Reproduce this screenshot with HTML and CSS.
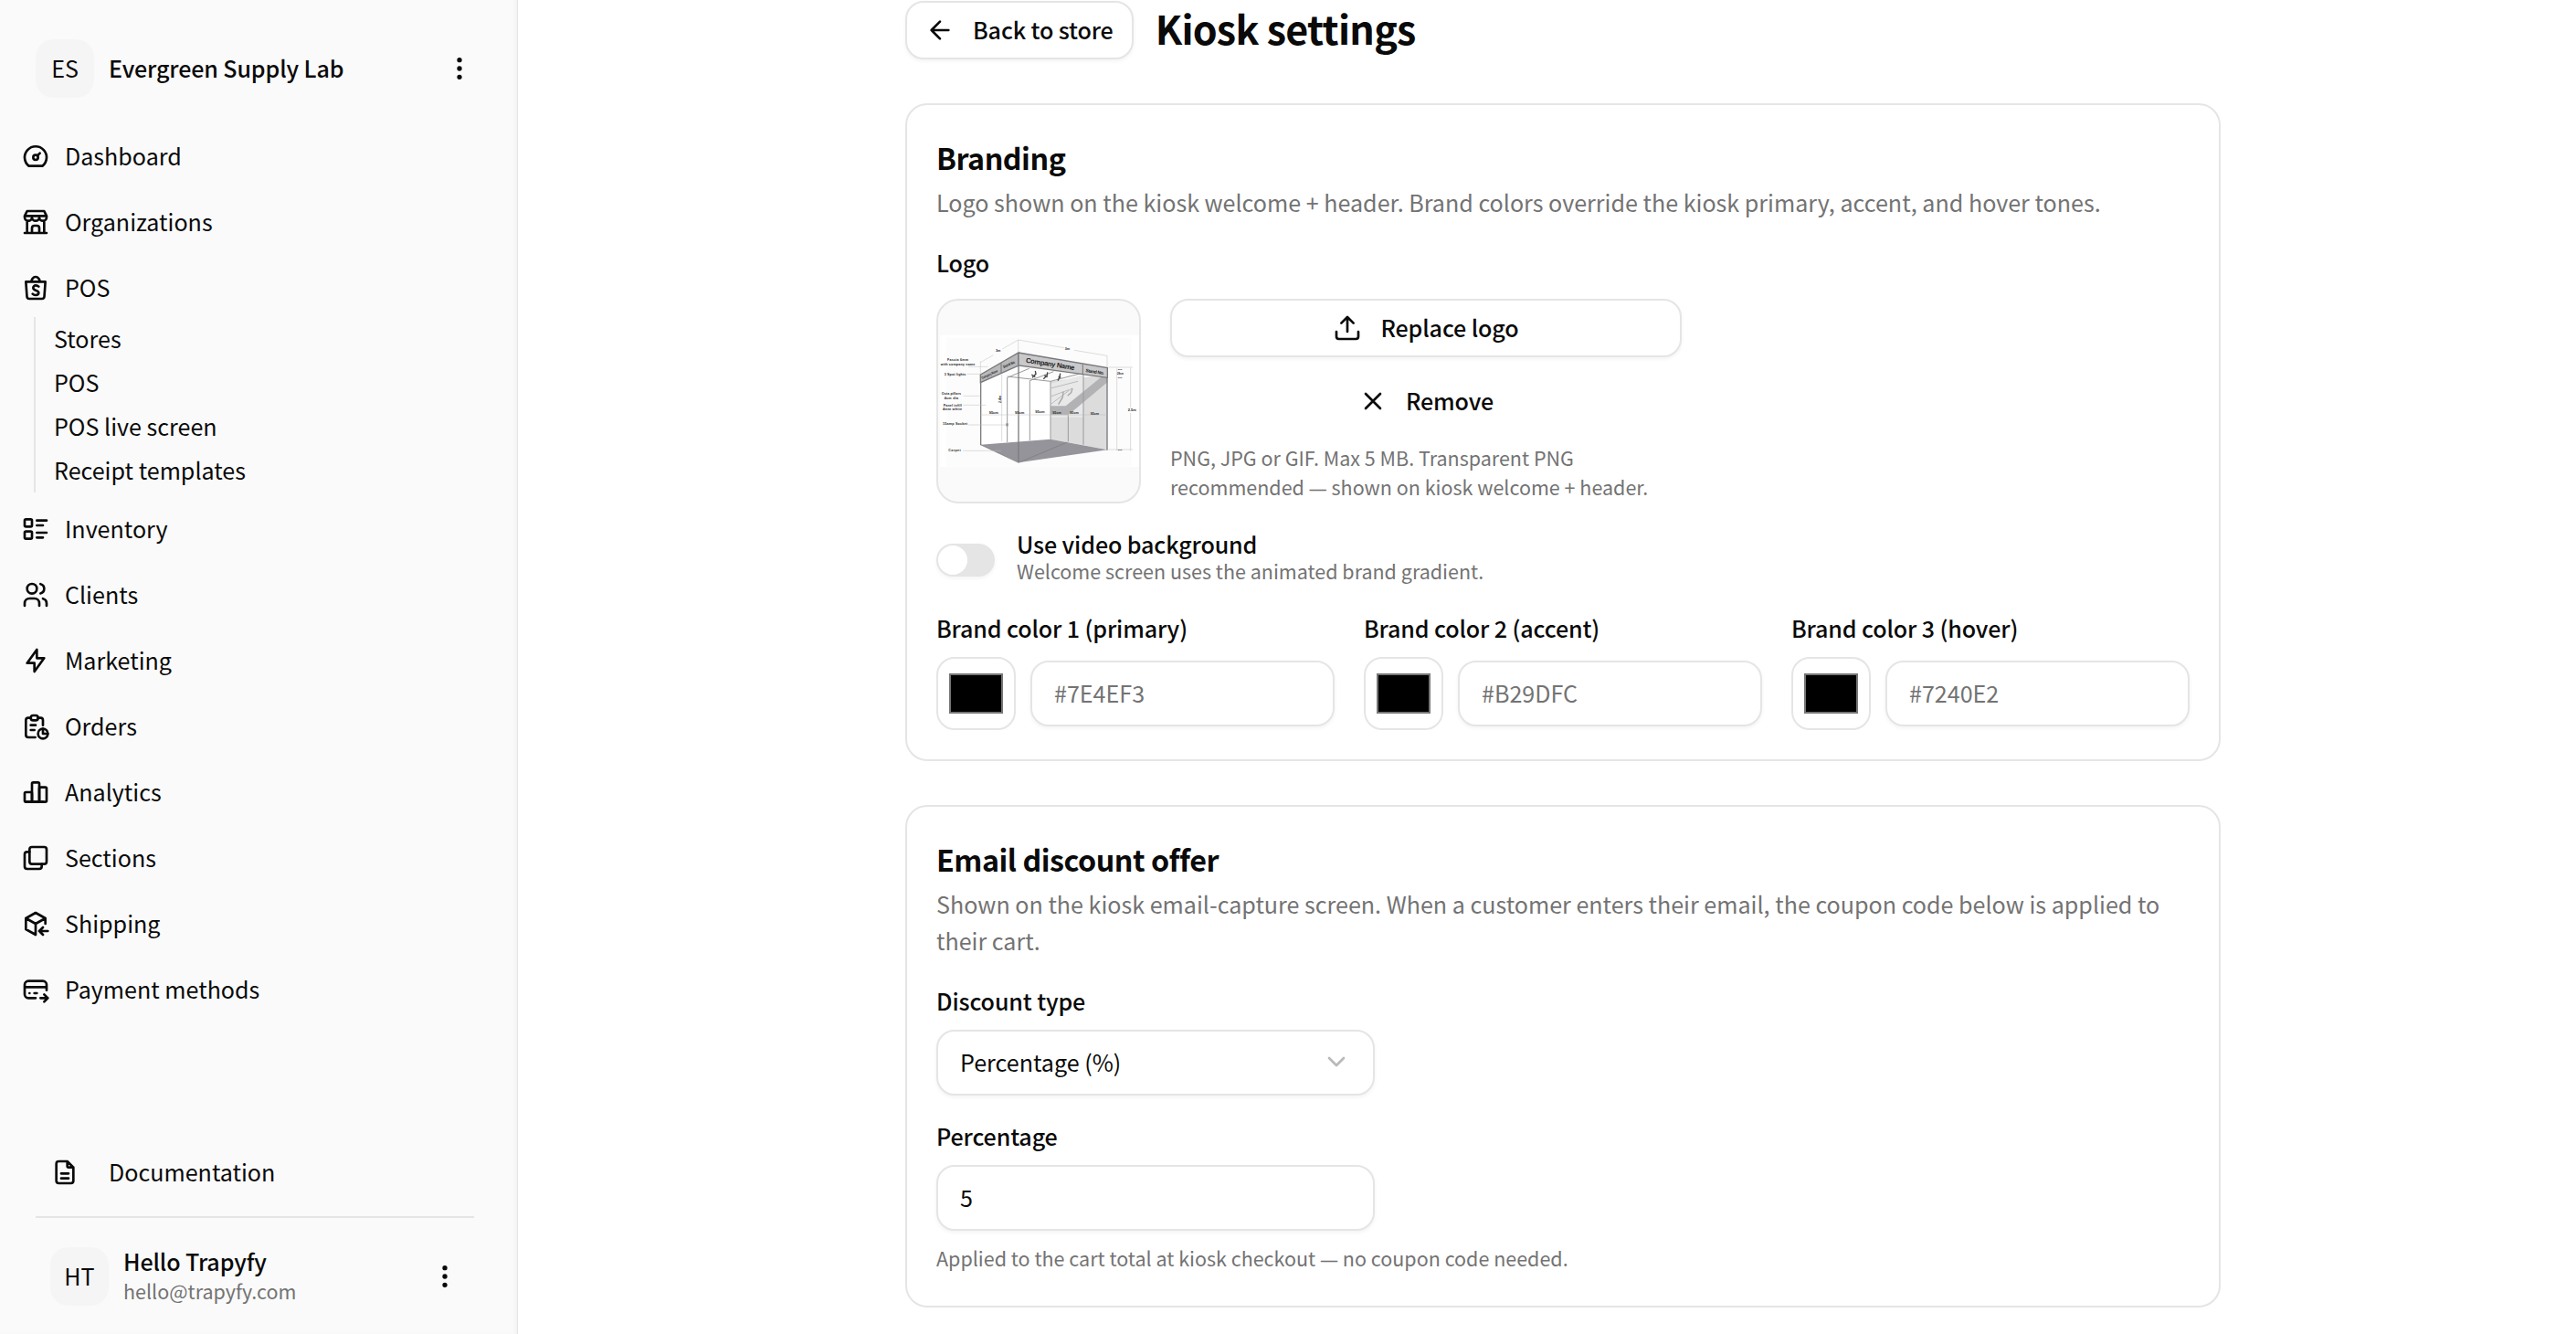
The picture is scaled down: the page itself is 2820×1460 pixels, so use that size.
FILE: index.html
```html
<!DOCTYPE html>
<html lang="en">

<head>
    <meta charset="UTF-8">
    <meta name="viewport" content="width=device-width, initial-scale=1.0">
    <title>Kiosk settings</title>
    <link rel="stylesheet" href="styles.css">
</head>

<body>
    <aside class="sidebar">
        <div class="org">
            <span class="avatar">ES</span>
            <span class="org-name">Evergreen Supply Lab</span>
            <svg class="icon" viewBox="0 0 24 24"><circle cx="12" cy="5" r="1"/><circle cx="12" cy="12" r="1"/><circle cx="12" cy="19" r="1"/></svg>
        </div>

        <nav class="menu">
            <a class="menu-item">
                <svg class="icon" viewBox="0 0 24 24"><circle cx="12" cy="13" r="2"/><path d="M13.45 11.55l2.05 -2.05M6.4 20a9 9 0 1 1 11.2 0z"/></svg>
                <span>Dashboard</span>
            </a>
            <a class="menu-item">
                <svg class="icon" viewBox="0 0 24 24"><path d="M3 21h18M3 7v1a3 3 0 0 0 6 0v-1m0 1a3 3 0 0 0 6 0v-1m0 1a3 3 0 0 0 6 0v-1h-18l2 -4h14l2 4M5 21v-10.15M19 21v-10.15M9 21v-4a2 2 0 0 1 2 -2h2a2 2 0 0 1 2 2v4"/></svg>
                <span>Organizations</span>
            </a>
            <a class="menu-item">
                <svg class="icon" viewBox="0 0 24 24"><path d="M4 7l.867 12.143a2 2 0 0 0 2 1.857h10.276a2 2 0 0 0 2 -1.857l.867 -12.143h-16zM8.5 7c0 -1.653 1.5 -4 3.5 -4s3.5 2.347 3.5 4M9.5 17c.413 .462 1 1 2.5 1s2.5 -.897 2.5 -2s-1 -1.5 -2.5 -2s-2 -1.47 -2 -2c0 -1.104 1 -2 2 -2s1.5 0 2.5 1"/></svg>
                <span>POS</span>
            </a>
            <div class="submenu">
                <a>Stores</a>
                <a>POS</a>
                <a>POS live screen</a>
                <a>Receipt templates</a>
            </div>
            <a class="menu-item">
                <svg class="icon" viewBox="0 0 24 24"><path d="M13 5h8M13 9h5M13 15h8M13 19h5"/><rect x="3" y="4" width="6" height="6" rx="1"/><rect x="3" y="14" width="6" height="6" rx="1"/></svg>
                <span>Inventory</span>
            </a>
            <a class="menu-item">
                <svg class="icon" viewBox="0 0 24 24"><circle cx="9" cy="7" r="4"/><path d="M3 21v-2a4 4 0 0 1 4 -4h4a4 4 0 0 1 4 4v2M16 3.13a4 4 0 0 1 0 7.75M21 21v-2a4 4 0 0 0 -3 -3.85"/></svg>
                <span>Clients</span>
            </a>
            <a class="menu-item">
                <svg class="icon" viewBox="0 0 24 24"><path d="M13 3v7h6l-8 11v-7h-6l8 -11"/></svg>
                <span>Marketing</span>
            </a>
            <a class="menu-item">
                <svg class="icon" viewBox="0 0 24 24"><path d="M8 5h-2a2 2 0 0 0 -2 2v12a2 2 0 0 0 2 2h5.697M18 14v4h4M18 11v-4a2 2 0 0 0 -2 -2h-2M8 11h4M8 15h3"/><rect x="8" y="3" width="6" height="4" rx="2"/><circle cx="18" cy="18" r="4"/></svg>
                <span>Orders</span>
            </a>
            <a class="menu-item">
                <svg class="icon" viewBox="0 0 24 24"><rect x="3" y="12" width="6" height="8" rx="1"/><rect x="9" y="4" width="6" height="16" rx="1"/><rect x="15" y="8" width="6" height="12" rx="1"/><path d="M4 20h14"/></svg>
                <span>Analytics</span>
            </a>
            <a class="menu-item">
                <svg class="icon" viewBox="0 0 24 24"><rect x="7" y="3" width="14" height="14" rx="2"/><path d="M17 17v2a2 2 0 0 1 -2 2h-10a2 2 0 0 1 -2 -2v-10a2 2 0 0 1 2 -2h2"/></svg>
                <span>Sections</span>
            </a>
            <a class="menu-item">
                <svg class="icon" viewBox="0 0 24 24"><path d="M12 21l-8 -4.5v-9l8 -4.5l8 4.5v4.5M12 12l8 -4.5M12 12v9M12 12l-8 -4.5M22 18h-7M18 15l-3 3l3 3"/></svg>
                <span>Shipping</span>
            </a>
            <a class="menu-item">
                <svg class="icon" viewBox="0 0 24 24"><path d="M12 19h-6a3 3 0 0 1 -3 -3v-8a3 3 0 0 1 3 -3h12a3 3 0 0 1 3 3v4.5M3 10h18M16 19h6M19 16l3 3l-3 3M7.005 15h.005M11 15h2"/></svg>
                <span>Payment methods</span>
            </a>
        </nav>

        <a class="docs">
            <svg class="icon" viewBox="0 0 24 24"><path d="M14 3v4a1 1 0 0 0 1 1h4M17 21h-10a2 2 0 0 1 -2 -2v-14a2 2 0 0 1 2 -2h7l5 5v11a2 2 0 0 1 -2 2zM9 17h6M9 13h6"/></svg>
            <span>Documentation</span>
        </a>

        <div class="user">
            <span class="avatar">HT</span>
            <div class="user-info">
                <div class="user-name">Hello Trapyfy</div>
                <div class="user-email">hello@trapyfy.com</div>
            </div>
            <svg class="icon" viewBox="0 0 24 24"><circle cx="12" cy="5" r="1"/><circle cx="12" cy="12" r="1"/><circle cx="12" cy="19" r="1"/></svg>
        </div>
    </aside>

    <main class="content">
        <header class="page-header">
            <button class="btn btn-back">
                <svg class="icon" viewBox="0 0 24 24"><path d="M12 19l-7 -7l7 -7M19 12H5"/></svg>
                <span>Back to store</span>
            </button>
            <h1>Kiosk settings</h1>
        </header>

        <section class="card">
            <h2>Branding</h2>
            <p class="description">Logo shown on the kiosk welcome + header. Brand colors override the kiosk primary, accent, and hover tones.</p>

            <div class="label">Logo</div>
            <div class="logo-row">
                <div class="logo-preview">
                    <!-- Exhibition stand drawing -->
                    <svg class="stand" viewBox="51 57 660 660">
                        <rect x="57" y="171" width="655" height="432" fill="#fff"/>
                        <rect x="78" y="179" width="607" height="422" fill="#fcfcfc"/>
                        <path d="M190 326L315 268V584L190 530z" fill="#fefefe"/>
                        <path d="M280 308L420 322V512L190 530V326z" fill="#fff"/>
                        <path d="M420 322L607 300V546L420 512z" fill="#dcdcdd"/>
                        <path d="M420 330L528 300V440H420z" fill="#e8e8e9"/>
                        <path d="M420 403H470L590 305H607V325L478 433H420z" fill="#b2b2b4"/>
                        <path d="M190 530L420 512L607 547L315 589z" fill="#94949a"/>
                        <path d="M190 530L315 589L475 522" fill="none" stroke="#77777c" stroke-width="2"/>
                        <g fill="none" stroke="#9a9a9d" stroke-width="3">
                            <path d="M278 310V522M352 320V516M420 322V512M478 433V520M528 300V530"/>
                            <path d="M278 310L350 280M352 320L430 290M420 322L520 296M278 306L420 322"/>
                            <path d="M420 345L510 322M420 372L480 350M420 398L490 345" stroke="#bbb"/>
                        </g>
                        <g stroke="#7c7c80" stroke-width="4">
                            <path d="M191 300V532M315 228V588M606 278V548"/>
                        </g>
                        <path d="M190 300L315 228V270L190 326z" fill="#b9b9bb" stroke="#77777a" stroke-width="4"/>
                        <path d="M315 228L607 278V310L315 270z" fill="#c9c9cb" stroke="#77777a" stroke-width="4"/>
                        <path d="M258 262V294M526 266V298" stroke="#77777a" stroke-width="3"/>
                        <g fill="none" stroke="#444" stroke-width="4">
                            <path d="M370 288l2 10l-12 12M358 300l12 8M410 292l-1 10l-12 12M400 302l10 6M452 296l-2 12l-6 12M446 306l8 4"/>
                        </g>
                        <path d="M462 356l-2 18l-14 24M492 345l-4 14l-12 10" fill="none" stroke="#a5a5a8" stroke-width="4"/>
                        <g fill="none" stroke="#bdbdbd" stroke-width="1.5">
                            <path d="M190 260L232 236M262 216L314 186L465 212M498 220L606 238V275M190 256V298M314 186V228"/>
                            <path d="M638 280V550M683 278V408M683 426V550M610 276H690M610 546H690"/>
                            <path d="M150 274H215M145 298H190M133 370H190M133 400H208M150 465H275M133 550H258M190 432H606M260 300V520"/>
                        </g>
                        <rect x="274" y="460" width="7" height="9" fill="#888"/>
                        <g class="stand-text">
                            <text x="338" y="260" font-size="23" textLength="162" transform="rotate(9 338 260)">Company Name</text>
                            <text x="535" y="291" font-size="15" textLength="61" transform="rotate(9 535 291)">Stand No.</text>
                            <text x="196" y="315" font-size="12" textLength="57" lengthAdjust="spacingAndGlyphs" transform="rotate(-25 196 315)">Company Name</text>
                            <text x="266" y="279" font-size="13" textLength="43" lengthAdjust="spacingAndGlyphs" transform="rotate(-24 266 279)">Stand No.</text>
                            <text x="240" y="225" font-size="11">3m</text>
                            <text x="467" y="220" font-size="11">3m</text>
                            <text x="81" y="254" font-size="11" textLength="69">Fascia 6mm</text>
                            <text x="59" y="269" font-size="11" textLength="113">with company name</text>
                            <text x="71" y="302" font-size="11" textLength="71">3 Spot lights</text>
                            <text x="62" y="367" font-size="11" textLength="64">Octa pillars</text>
                            <text x="71" y="381" font-size="11" textLength="46">4cm dia</text>
                            <text x="68" y="404" font-size="11" textLength="60">Panel infill</text>
                            <text x="66" y="418" font-size="11" textLength="63">4mm white</text>
                            <text x="66" y="464" font-size="11" textLength="81">15amp Socket</text>
                            <text x="85" y="552" font-size="11" textLength="40">Carpet</text>
                            <text x="218" y="428" font-size="12">95cm</text>
                            <text x="303" y="428" font-size="12">95cm</text>
                            <text x="370" y="427" font-size="12">95cm</text>
                            <text x="427" y="428" font-size="11">95cm</text>
                            <text x="484" y="430" font-size="11">95cm</text>
                            <text x="551" y="432" font-size="11">95cm</text>
                            <text x="258" y="393" font-size="11" transform="rotate(-90 258 393)">2.4m</text>
                            <text x="674" y="420" font-size="12">2.5m</text>
                            <text x="641" y="284" font-size="7">6cm</text>
                            <text x="639" y="299" font-size="8">28cm</text>
                            <text x="641" y="312" font-size="7">6cm</text>
                            <text x="641" y="549" font-size="7">6cm</text>
                        </g>
                    </svg>
                </div>
                <div class="logo-actions">
                    <button class="btn">
                        <svg class="icon" viewBox="0 0 24 24"><path d="M12 3v12M17 8l-5 -5l-5 5M21 15v4a2 2 0 0 1 -2 2H5a2 2 0 0 1 -2 -2v-4"/></svg>
                        <span>Replace logo</span>
                    </button>
                    <button class="btn btn-ghost">
                        <svg class="icon" viewBox="0 0 24 24"><path d="M18 6L6 18M6 6l12 12"/></svg>
                        <span>Remove</span>
                    </button>
                    <p class="hint">PNG, JPG or GIF. Max 5 MB. Transparent PNG<br>recommended <span class="dash">—</span> shown on kiosk welcome + header.</p>
                </div>
            </div>

            <div class="switch-row">
                <span class="switch"></span>
                <div>
                    <div class="label">Use video background</div>
                    <div class="switch-hint">Welcome screen uses the animated brand gradient.</div>
                </div>
            </div>

            <div class="colors">
                <div>
                    <div class="label">Brand color 1 (primary)</div>
                    <div class="color-field">
                        <span class="swatch"></span>
                        <input class="input" type="text" placeholder="#7E4EF3">
                    </div>
                </div>
                <div>
                    <div class="label">Brand color 2 (accent)</div>
                    <div class="color-field">
                        <span class="swatch"></span>
                        <input class="input" type="text" placeholder="#B29DFC">
                    </div>
                </div>
                <div>
                    <div class="label">Brand color 3 (hover)</div>
                    <div class="color-field">
                        <span class="swatch"></span>
                        <input class="input" type="text" placeholder="#7240E2">
                    </div>
                </div>
            </div>
        </section>

        <section class="card">
            <h2>Email discount offer</h2>
            <p class="description">Shown on the kiosk email-capture screen. When a customer enters their email, the coupon code below is applied to<br>their cart.</p>

            <div class="field">
                <div class="label">Discount type</div>
                <div class="input select">
                    <span>Percentage (%)</span>
                    <svg class="icon" viewBox="0 0 24 24"><path d="M6 9l6 6l6 -6"/></svg>
                </div>
            </div>
            <div class="field">
                <div class="label">Percentage</div>
                <input class="input" type="text" value="5">
            </div>
            <p class="hint">Applied to the cart total at kiosk checkout <span class="dash">—</span> no coupon code needed.</p>
        </section>
    </main>
</body>

</html>
```
FILE: styles.css
```css
:root {
    --text: #0a0a0a;
    --muted: #737373;
    --border: #e5e5e5;
    --shadow: 0 2px 4px rgba(0, 0, 0, 0.05);
}

*,
*::before {
    box-sizing: border-box;
}

body {
    margin: 0;
    height: 1460px;
    display: flex;
    overflow: hidden;
    background: #fff;
    color: var(--text);
    font-family: "Noto Sans CJK SC", "Noto Sans", sans-serif;
    font-size: 25.08px;
    line-height: 28px;
}

h1, h2, p {
    margin: 0;
}

.icon {
    width: 32px;
    height: 32px;
    flex: none;
    fill: none;
    stroke: currentColor;
    stroke-width: 2;
    stroke-linecap: round;
    stroke-linejoin: round;
}

/* Sidebar */
.sidebar {
    width: 567px;
    flex: none;
    display: flex;
    flex-direction: column;
    padding: 43px 0 31px 23px;
    background: #fafafa;
    border-right: 1px solid var(--border);
    box-shadow: inset -4px 0 4px -2px rgba(0, 0, 0, 0.03);
}

.avatar {
    width: 64px;
    height: 64px;
    flex: none;
    display: flex;
    align-items: center;
    justify-content: center;
    padding-bottom: 3px;
    border-radius: 20px;
    background: #f5f5f5;
}

.org {
    display: flex;
    align-items: center;
    gap: 16px;
    padding: 0 47px 0 16px;
}

.org-name {
    flex: 1;
    padding-bottom: 3px;
    font-weight: 500;
    letter-spacing: -0.13px;
}

.menu {
    flex: 1;
    display: flex;
    flex-direction: column;
    gap: 8px;
    padding-top: 32px;
}

.menu-item {
    height: 64px;
    display: flex;
    align-items: center;
    gap: 16px;
}

.menu-item span,
.docs span {
    padding-bottom: 3px;
}

.submenu {
    margin: -8px 0 0 14px;
    padding-left: 20px;
    border-left: 2px solid var(--border);
}

.submenu a {
    display: block;
    height: 48px;
    line-height: 46px;
}

.docs {
    display: flex;
    align-items: center;
    gap: 32px;
    height: 64px;
    margin-bottom: 16px;
    padding-left: 32px;
}

.user {
    display: flex;
    align-items: center;
    gap: 16px;
    width: 480px;
    margin-left: 16px;
    padding: 32px 16px 0;
    border-top: 2px solid var(--border);
}

.user-info {
    flex: 1;
}

.user-name {
    line-height: 31px;
    font-weight: 500;
    letter-spacing: -0.13px;
}

.user-email {
    line-height: 33px;
    font-size: 21.5px;
    color: var(--muted);
}

/* Page content */
.content {
    width: 1864px;
    padding: 1px 0 0 424px;
}

.page-header {
    display: flex;
    align-items: center;
    gap: 24px;
    margin-bottom: 48px;
}

h1 {
    height: 64px;
    line-height: 58px;
    font-size: 43px;
    font-weight: 600;
    letter-spacing: -0.7px;
}

.btn {
    height: 64px;
    display: flex;
    align-items: center;
    justify-content: center;
    gap: 20px;
    padding: 0 20px;
    border: 2px solid var(--border);
    border-radius: 20px;
    background: #fff;
    box-shadow: var(--shadow);
    color: var(--text);
    font: inherit;
    font-weight: 500;
    letter-spacing: -0.13px;
}

.btn span {
    padding-bottom: 3px;
}

.btn-ghost {
    border-color: transparent;
    background: none;
    box-shadow: none;
}

.card {
    margin-bottom: 48px;
    padding: 32px;
    border: 2px solid var(--border);
    border-radius: 24px;
}

h2 {
    line-height: 50px;
    font-size: 32.25px;
    font-weight: 600;
    letter-spacing: -0.48px;
}

.description {
    margin: 4px 0 32px;
    line-height: 40px;
    color: var(--muted);
}

.label {
    font-weight: 500;
    letter-spacing: -0.13px;
}

.hint {
    margin: 14px 0 2px;
    font-size: 21.5px;
    line-height: 32px;
    color: var(--muted);
}

.dash {
    font-family: "Open Sans", sans-serif;
    font-size: 20px;
}

/* Logo */
.logo-row {
    display: flex;
    gap: 32px;
    margin-top: 26px;
    height: 228px;
}

.logo-preview {
    width: 224px;
    height: 224px;
    border: 2px solid var(--border);
    border-radius: 24px;
    background: #fafafa;
    overflow: hidden;
}

.stand {
    display: block;
    width: 220px;
    height: 220px;
}

.stand-text {
    font-family: "Liberation Sans", sans-serif;
    font-weight: bold;
    fill: #222;
}

.logo-actions {
    width: 560px;
}

.btn-ghost {
    margin-top: 16px;
}

.logo-actions .btn {
    width: 100%;
}

/* Switch */
.switch-row {
    display: flex;
    align-items: center;
    gap: 24px;
    height: 64px;
    margin: 26px 0 28px;
}

.switch-row > div {
    height: 64px;
}

.switch {
    width: 64px;
    height: 36px;
    padding: 2px;
    border-radius: 18px;
    background: var(--border);
    box-shadow: var(--shadow);
}

.switch::before {
    content: "";
    display: block;
    width: 32px;
    height: 32px;
    border-radius: 50%;
    background: #fff;
}

.switch-hint {
    margin-top: 2px;
    font-size: 21.5px;
    color: var(--muted);
}

/* Form fields */
.colors {
    display: grid;
    grid-template-columns: repeat(3, 1fr);
    gap: 32px;
}

.color-field {
    display: flex;
    align-items: center;
    gap: 16px;
    margin-top: 18px;
}

.swatch {
    width: 87px;
    height: 80px;
    flex: none;
    padding: 16px 12px;
    border: 2px solid var(--border);
    border-radius: 20px;
}

.swatch::before {
    content: "";
    display: block;
    height: 44px;
    border: 2px solid #767676;
    background: #000;
}

.input {
    width: 100%;
    min-width: 0;
    height: 72px;
    padding: 0 24px 3px;
    border: 2px solid var(--border);
    border-radius: 20px;
    background: #fff;
    box-shadow: var(--shadow);
    color: var(--text);
    font: inherit;
}

.input::placeholder {
    color: var(--muted);
    opacity: 1;
}

.field {
    width: 480px;
    margin-bottom: 30px;
}

.field:last-of-type {
    margin-bottom: 0;
}

.field .input {
    margin-top: 18px;
}

.select {
    display: flex;
    align-items: center;
    justify-content: space-between;
}

.select .icon {
    color: #b9b9b9;
}
```
